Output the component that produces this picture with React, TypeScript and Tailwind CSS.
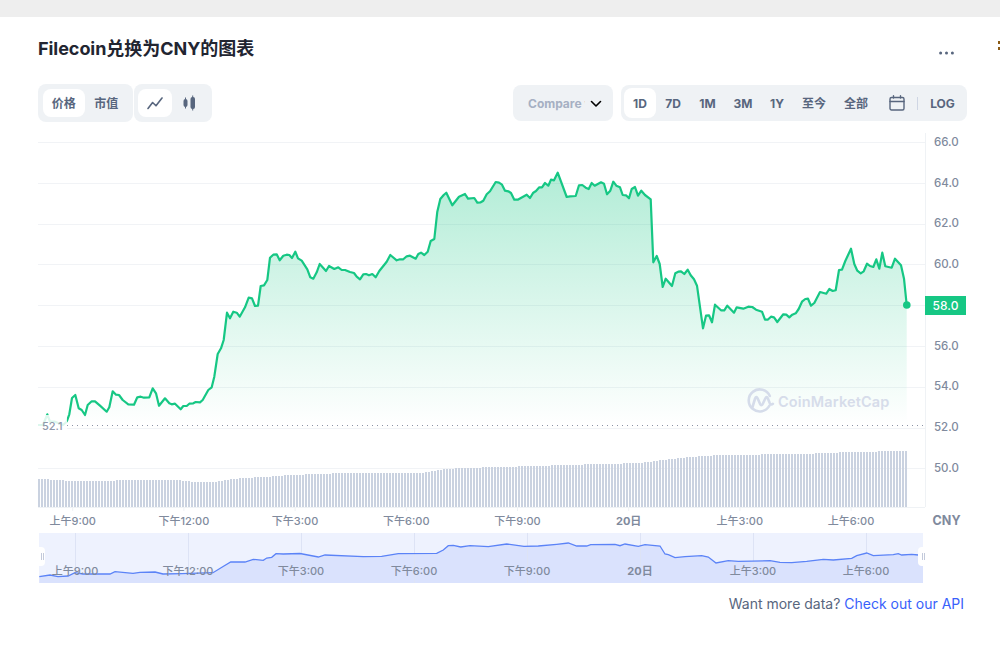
import React from "react";

const FONT = "font-['Inter','Noto_Sans_CJK_SC',sans-serif]";

const linePts: [number, number][] = [
  [66.7,421.7],[69.3,414.3],[72,398],[75.3,395],[78.7,408.3],[81.7,410],[85,415],[87.7,405],[91.7,401.3],[95,401.3],[100,405.7],[106.7,411.7],[109.3,407.3],[112.7,391.3],[116,394.7],[119,395],[122.7,400],[128.3,404.3],[134,404.7],[137.3,397.3],[140.7,396.7],[144,397.7],[149.3,397.3],[152.7,388.3],[156,393.3],[159,405.7],[165,398.3],[169.3,403.3],[171.7,404.3],[175,403.7],[180.7,409.3],[183.3,406],[186.7,406],[189.3,403.7],[193.3,403.3],[195.7,402],[200,402.3],[202.7,400],[208.3,390],[211.7,387.3],[214.3,376.7],[217.7,354],[221,348.3],[223.7,340],[227,312.7],[230,318.3],[233.3,311.7],[236.7,312.7],[239.7,316.7],[245,307.3],[248.7,297.7],[252,298.3],[255,306],[258,305.7],[260.7,286],[264,285.3],[267.3,280],[270,257.7],[273.3,254.7],[276.7,254.3],[279.7,260.3],[283.3,255.7],[286.7,254.7],[289.3,255],[292,258],[295.3,251.7],[298,258.3],[301.7,260.7],[307.3,269.3],[310.3,277.3],[313.3,278.7],[316.7,272.3],[319.7,264],[326,271],[329,266],[334.3,269],[338.3,267.3],[341.7,270],[345,270],[350,272],[354,273],[356.7,276.7],[360,279.3],[363.3,274.3],[366,274],[369,275.3],[372.3,274],[375.7,277.3],[379.3,271],[386.7,261.7],[390.3,255],[396.7,260.3],[400,259.3],[403.3,259.3],[406.7,256.3],[410,255.7],[415.7,258.7],[418.3,254],[421,252.7],[424.3,255],[427.7,251.7],[430.7,241],[434.3,239],[437.3,211.7],[440.3,199],[443.7,195],[446.3,192.7],[452.3,205.3],[459,196.7],[465,194],[468,198.7],[474.3,198],[477.3,202.7],[480.7,202.3],[483.3,200.7],[486.7,194.3],[490,191.3],[495.7,182],[499,182.7],[502,184.7],[505,190.7],[508.3,191.3],[511,193],[514.3,199.7],[517.7,199.7],[526.7,194.7],[530,198],[533.3,192.7],[536,191],[539.3,187.3],[542,187.3],[545,183],[548.3,185.7],[551,179.7],[554,180.3],[557.7,172.7],[566.7,197],[570,196.3],[575.7,196],[579,185.3],[582.3,185],[585.7,187.7],[588.7,189],[591.7,183],[594.7,185.7],[601,182.3],[604,183.7],[607,194.3],[610.3,190.7],[613.3,181.7],[616.3,185.7],[620,187.3],[622.7,195],[626,195.3],[629,198.3],[631.7,189],[635,187],[638,195.7],[641.3,190.7],[645,195],[650.7,199.3],[653.3,262.3],[656.7,256],[659.7,264],[662.7,287],[665.7,278.7],[672,286],[675.3,273.3],[678.3,271.7],[681,271.3],[684.3,274],[687.7,269.7],[690.7,275.3],[694,279.3],[697,285.7],[703,328.3],[706,315.7],[709,315.3],[712,322.3],[715,304.7],[721,310.3],[724.3,310.3],[727.3,305.7],[734,312.7],[736.7,307.3],[743.3,308.7],[748.3,306.7],[752.3,307],[756,309.7],[762,311.7],[765,319.7],[767.7,319.7],[771,316.7],[774,317.3],[777.3,322],[783.3,314.3],[786.3,314.7],[789.3,317.3],[792.3,314.7],[795.7,313.3],[798.7,309],[802,301.7],[805.3,299],[808,298.7],[811,305.7],[814.3,303],[820,292],[826.3,293.7],[829.3,289],[832.7,291],[835.7,290.3],[839,270],[842,269.7],[845.3,261],[851,248.7],[854.3,264],[857.3,270.7],[860.7,273.3],[863.7,271.3],[867,263.7],[870,266],[873.3,267],[876.3,259.3],[879.3,268.7],[882.3,252.7],[885.3,266.3],[891.7,267.7],[895,258.7],[901,265.3],[904,278.7],[906.7,305],
];

// the bit of line that sits behind the 52.1 label
const stubPts: [number, number][] = [[38,425],[43,425],[47.3,414.3],[50,421.7],[55,421.7],[63,425],[66.7,421.7]];

const navPts: [number, number][] = [
  [39.3,576.7],[50,575],[58,576.7],[68,576],[75,572.7],[83,574],[110,574],[115,571.7],[133,573.3],[140,572.3],[155,572],[163,574],[182,573.7],[213,572.7],[222.7,566.7],[230.7,562],[245,562],[253.3,559.3],[263.3,560.3],[266.7,558],[271.7,557.3],[276,553.7],[283.3,554],[300,553.5],[318.3,557],[325,555],[363.3,556.7],[381.7,556.3],[398.3,553.7],[436.7,553.3],[443.3,550],[448.3,545.7],[453.3,545.3],[460.7,547],[470,545.7],[488.3,546.7],[506.7,544],[524,546.3],[538.3,546],[556.7,544.3],[568.3,543],[576.7,546],[586.7,546],[590.7,544.7],[615,544.3],[620,545.7],[625,544],[638.3,546.3],[645,544.7],[660,546],[665,554],[668.3,554.7],[675,557.7],[685,556.7],[701.7,555.7],[708.3,557],[716,563],[728.3,560.7],[738.3,561.3],[770,560.7],[780,562.3],[791.7,562.7],[806.7,561.3],[823.3,559.3],[833.3,560],[851.7,558.3],[856.7,555.7],[866.7,553],[873.3,555.7],[893.3,554.7],[898.3,553.7],[901.7,555],[911.7,554.3],[918.3,555],[923,555],
];

const volKeys: [number, number][] = [
  [38,479],[60,480],[65,481],[110,481],[120,480],[180,480.5],[195,482],[212,482],[225,480],[240,478],[262,477],[290,475],[330,473.5],[420,473],[440,469.5],[460,468],[500,467],[600,464],[640,463],[660,460],[680,458],[700,456],[720,455],[800,454],[850,452],[900,451],[909,451],
];

const toPath = (pts: [number, number][]) => pts.map(([x, y], i) => `${i ? "L" : "M"}${x} ${y}`).join(" ");

const volTop = (x: number) => {
  for (let i = 1; i < volKeys.length; i++) {
    const [x0, y0] = volKeys[i - 1];
    const [x1, y1] = volKeys[i];
    if (x <= x1) return Math.round(y0 + ((x - x0) / (x1 - x0)) * (y1 - y0));
  }
  return 451;
};

const bars: number[] = [];
for (let x = 38; x < 908; x += 3) bars.push(x);

const gridYs = [142, 183, 224, 264, 305, 346, 387, 428, 468];
const yLabels = ["66.0", "64.0", "62.0", "60.0", "58.0", "56.0", "54.0", "52.0", "50.0"];
const xLabels = ["上午9:00", "下午12:00", "下午3:00", "下午6:00", "下午9:00", "20日", "上午3:00", "上午6:00"];
const xTicks = [72.7, 183.9, 295.1, 406.3, 517.5, 628.7, 739.9, 851.1];
const navTicks = [75, 188, 301, 414, 527, 640, 753, 866];

const ranges = [
  { label: "1D", w: "w-[32px]", active: true },
  { label: "7D", w: "w-[34px]" },
  { label: "1M", w: "w-[35px]" },
  { label: "3M", w: "w-[36px]" },
  { label: "1Y", w: "w-[32px]" },
  { label: "至今", w: "w-[42px]" },
  { label: "全部", w: "w-[42px]" },
];

const Chart = () => (
  <svg width={888} height={375} viewBox="38 133 888 375" className="block overflow-visible shrink-0">
    <defs>
      <linearGradient id="area" gradientUnits="userSpaceOnUse" x1="0" y1="172" x2="0" y2="425">
        <stop offset="0" stopColor="#16c784" stopOpacity="0.33" />
        <stop offset="1" stopColor="#16c784" stopOpacity="0" />
      </linearGradient>
    </defs>
    {gridYs.map((y) => (
      <line key={y} x1={38} x2={925} y1={y + 0.5} y2={y + 0.5} stroke="#f1f3f6" />
    ))}
    <line x1={925.5} x2={925.5} y1={133} y2={507} stroke="#eff2f5" />
    <line x1={38} x2={925} y1={507.5} y2={507.5} stroke="#eff2f5" />
    {xTicks.map((x) => (
      <line key={x} x1={x} x2={x} y1={507} y2={511} stroke="#eff2f5" />
    ))}
    {bars.map((x) => (
      <rect key={x} x={x} y={volTop(x)} width={2} height={507 - volTop(x)} fill="#cad2e0" />
    ))}
    <path d={`${toPath(stubPts)} L66.7 425 Z`} fill="url(#area)" />
    <path d={`${toPath(linePts)} L906.7 425 L66.7 425 Z`} fill="url(#area)" />
    <path d={toPath(stubPts)} fill="none" stroke="#16c784" strokeWidth={2.2} strokeLinejoin="round" />
    <path d={toPath(linePts)} fill="none" stroke="#16c784" strokeWidth={2.2} strokeLinejoin="round" />
    <line x1={67} x2={925} y1={425.5} y2={425.5} stroke="#8b93a5" strokeDasharray="1 4" />
    <circle cx={906.8} cy={305} r={3.8} fill="#16c784" />
    {/* watermark logo */}
    <path d="M769.5 405.5A11 11 0 1 1 769.8 396" fill="none" stroke="#d5dcea" strokeWidth={2.6} strokeLinecap="round" />
    <path d="M752.5 407l2.6-8.5q1.2-3 2.6 0l2.4 5.5q1.2 2.6 2.6 0l2.6-5.5q1.4-3 2.6 0l1.8 4.5q1.2 2.5 3.2.8" fill="none" stroke="#d5dcea" strokeWidth={2.6} strokeLinecap="round" strokeLinejoin="round" />
  </svg>
);

const Navigator = () => (
  <svg width={884} height={50} viewBox="39 533 884 50" className="absolute inset-0 block">
    <rect x={39} y={533} width={884} height={50} fill="#eef2fe" />
    <path d={`${toPath(navPts)} L923 583 L39.3 583 Z`} fill="#dae2fd" />
    {navTicks.map((x) => (
      <line key={x} x1={x + 0.5} x2={x + 0.5} y1={533} y2={583} stroke="#dde3f5" />
    ))}
    <path d={toPath(navPts)} fill="none" stroke="#5b83f7" strokeWidth={1.3} />
  </svg>
);

export default function App() {
  return (
    <div className={`${FONT} relative w-[1000px] h-[650px] overflow-hidden bg-white text-[#222531]`}>
      <div className="h-[17px] bg-[#eeeeee]" />

      {/* stray glyph from the next column */}
      <div className="absolute left-[998px] top-[41px] flex flex-col gap-[3px]">
        <span className="block w-[2px] h-[3px] bg-[#8a5a14]" />
        <span className="block w-[2px] h-[3px] bg-[#8a5a14]" />
      </div>

      <div className="pl-[38px]">
        <div className="h-[67px] w-[916px] pt-[19px] flex justify-between">
          <h2 className="text-[18px] leading-[26px] font-bold tracking-[-0.05px]">Filecoin兑换为CNY的图表</h2>
          <svg width={15} height={4} viewBox="0 0 15 4" className="mt-[15px]">
            <circle cx="1.6" cy="2" r="1.5" fill="#58667e" />
            <circle cx="7.5" cy="2" r="1.5" fill="#58667e" />
            <circle cx="13.4" cy="2" r="1.5" fill="#58667e" />
          </svg>
        </div>

        <div className="h-[38px] w-[929px] flex items-center text-[12px] font-bold text-[#58667e]">
          <div className="flex h-[38px] w-[95px] p-[5px] rounded-[8px] bg-[#eff2f5]">
            <div className="w-[42px] pt-[1px] flex items-center justify-center rounded-[8px] bg-white">价格</div>
            <div className="w-[44px] pt-[1px] flex items-center justify-center">市值</div>
          </div>
          <div className="flex h-[38px] w-[78px] ml-[1px] p-[5px] pl-[4px] rounded-[8px] bg-[#eff2f5]">
            <div className="w-[34px] flex items-center justify-center rounded-[8px] bg-white">
              <svg width={16} height={13} viewBox="0 0 16 13" fill="none" stroke="#58667e" strokeWidth={1.6} strokeLinecap="round" strokeLinejoin="round" className="ml-[-1px]">
                <path d="M1 11.5L5.6 5.5L9 8.8L15 1" />
              </svg>
            </div>
            <div className="w-[35px] flex items-center justify-center">
              <svg width={13} height={16} viewBox="0 0 13 16" fill="#58667e">
                <rect x="0.5" y="4" width="4" height="8" rx="2" />
                <rect x="2" y="2.5" width="1" height="11" />
                <rect x="7.5" y="2" width="4.5" height="12" rx="2" />
                <rect x="9.2" y="0.5" width="1" height="15" />
              </svg>
            </div>
          </div>

          <div className="ml-auto flex items-center h-[36px] w-[100px] rounded-[8px] bg-[#eff2f5] pl-[15px]">
            <span className="block w-[57px] pt-[1px] overflow-hidden whitespace-nowrap text-[#a6b0c3]">Compare with</span>
            <svg width={12} height={8} viewBox="0 0 12 8" fill="none" stroke="#000" strokeWidth={1.6} strokeLinecap="round" strokeLinejoin="round" className="ml-[5px] mt-[1px]">
              <path d="M1.5 1.5L6 6L10.5 1.5" />
            </svg>
          </div>

          <div className="flex items-center h-[36px] w-[346px] ml-[8px] rounded-[8px] bg-[#eff2f5] pl-[3px]">
            {ranges.map((r) => (
              <div key={r.label} className={`${r.w} h-[30px] pt-[1px] flex items-center justify-center rounded-[8px] ${r.active ? "bg-white" : ""}`}>
                {r.label}
              </div>
            ))}
            <div className="w-[40px] flex items-center justify-center">
              <svg width={16} height={16} viewBox="0 0 16 16" fill="none" stroke="#58667e" strokeWidth={1.4} strokeLinecap="round">
                <rect x="1" y="2.5" width="14" height="12.5" rx="1.5" />
                <path d="M1 6.5H15M4.5 0.8V3M11.5 0.8V3" />
              </svg>
            </div>
            <div className="w-[1px] h-[13px] bg-[#cfd6e4]" />
            <div className="flex-1 pt-[1px] text-center">LOG</div>
          </div>
        </div>

        <div className="relative mt-[11px] h-[375px] flex">
          <Chart />
          <div className="pl-[8px] mt-[-10.9px] text-[11.5px] font-medium text-[#808a9d]">
            {yLabels.map((t) => (
              <div key={t} className="h-[40.75px] flex items-center">{t}</div>
            ))}
          </div>
          <div className="absolute left-[887px] top-[163px] w-[41px] h-[19px] flex items-center justify-center bg-[#16c784] text-white text-[12px] font-medium">
            58.0
          </div>
          <div className="absolute left-0 top-[282px] w-[29px] h-[18px] bg-white/85 pl-[4px] text-[11px] leading-[22px] font-medium text-[#8f98aa]">
            52.1
          </div>
          <div className="absolute left-[740px] top-[258px] text-[14.5px] leading-[22px] font-semibold tracking-[0.15px] text-[#d6dcea]">
            CoinMarketCap
          </div>
        </div>

        <div className="h-[25px] flex items-center ml-[-20.9px] pt-[1px] text-[11px] font-medium text-[#808a9d]">
          {xLabels.map((t) => (
            <div key={t} className={`w-[111.2px] shrink-0 text-center whitespace-nowrap ${t === "20日" ? "font-bold" : ""}`}>{t}</div>
          ))}
          <div className="ml-[26px] font-bold text-[12.5px]">CNY</div>
        </div>

        <div className="relative h-[50px] w-[884px] ml-[1px]">
          <Navigator />
          <div className="relative h-[50px] flex items-end pb-[4px] ml-[-20.5px] text-[11px] font-medium text-[#808a9d]">
            {xLabels.map((t) => (
              <div key={t} className={`w-[113px] shrink-0 text-center whitespace-nowrap ${t === "20日" ? "font-bold" : ""}`}>{t}</div>
            ))}
          </div>
          <div className="absolute left-0 top-[14px] w-[6px] h-[19px] rounded-r-[4px] bg-white flex items-center justify-center gap-[1px]">
            <span className="block w-[1px] h-[7px] bg-[#c3cadb]" />
            <span className="block w-[1px] h-[7px] bg-[#c3cadb]" />
          </div>
          <div className="absolute left-[879px] top-[14px] w-[10px] h-[19px] rounded-[4px] bg-white flex items-center justify-center gap-[1px]">
            <span className="block w-[1px] h-[7px] bg-[#c3cadb]" />
            <span className="block w-[1px] h-[7px] bg-[#c3cadb]" />
          </div>
        </div>

        <div className="w-[926px] h-[41px] flex items-center justify-end text-[14px] text-[#58667e]">
          <span>Want more data?&nbsp;</span>
          <span className="text-[#3861fb]">Check out our API</span>
        </div>
      </div>
    </div>
  );
}
